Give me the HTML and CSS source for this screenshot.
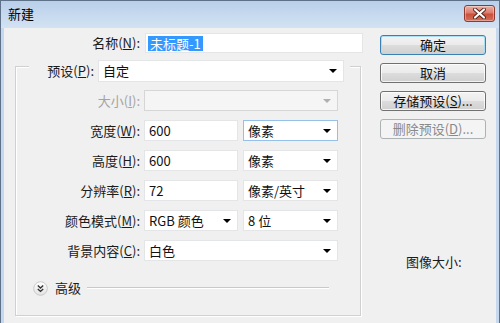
FILE: index.html
```html
<!DOCTYPE html>
<html lang="zh-CN">
<head>
    <meta charset="UTF-8">
    <title>新建</title>
    <link rel="stylesheet" href="styles.css">
</head>
<body>
    <div class="window">
        <div class="titlebar">
            <span class="title">新建</span>
            <span class="close">
                <svg width="13" height="11" viewBox="0 0 13 11">
                    <path d="M2 1.5 L11 9.5 M11 1.5 L2 9.5" stroke="#5a2118" stroke-width="4" stroke-linecap="round"/>
                    <path d="M2 1.5 L11 9.5 M11 1.5 L2 9.5" stroke="#ffffff" stroke-width="2.2" stroke-linecap="round"/>
                </svg>
            </span>
        </div>
        <div class="client">
            <div class="main">
                <div class="row name-row">
                    <label class="lbl lbl-name">名称(<u>N</u>):</label>
                    <div class="field w-name"><span class="selected">未标题-1</span></div>
                </div>

                <div class="group">
                    <div class="group-head">
                        <label class="lbl lbl-preset">预设(<u>P</u>):</label>
                        <div class="field combo w-preset">自定<i class="arrow"></i></div>
                    </div>

                    <div class="rows">
                        <div class="row disabled">
                            <label class="lbl">大小(<u>I</u>):</label>
                            <div class="field combo w-full"><i class="arrow"></i></div>
                        </div>
                        <div class="row">
                            <label class="lbl">宽度(<u>W</u>):</label>
                            <div class="field w-half">600</div>
                            <div class="field combo w-unit focused">像素<i class="arrow"></i></div>
                        </div>
                        <div class="row">
                            <label class="lbl">高度(<u>H</u>):</label>
                            <div class="field w-half">600</div>
                            <div class="field combo w-unit">像素<i class="arrow"></i></div>
                        </div>
                        <div class="row">
                            <label class="lbl">分辨率(<u>R</u>):</label>
                            <div class="field w-half">72</div>
                            <div class="field combo w-unit">像素/英寸<i class="arrow"></i></div>
                        </div>
                        <div class="row">
                            <label class="lbl">颜色模式(<u>M</u>):</label>
                            <div class="field combo w-half">RGB 颜色<i class="arrow"></i></div>
                            <div class="field combo w-unit">8 位<i class="arrow"></i></div>
                        </div>
                        <div class="row">
                            <label class="lbl">背景内容(<u>C</u>):</label>
                            <div class="field combo w-full">白色<i class="arrow"></i></div>
                        </div>
                    </div>

                    <div class="advanced">
                        <svg class="adv-icon" width="15" height="15" viewBox="0 0 15 15">
                            <defs>
                                <linearGradient id="knob" x1="0" y1="0" x2="0" y2="1">
                                    <stop offset="0" stop-color="#ffffff"/>
                                    <stop offset="1" stop-color="#e2e2e2"/>
                                </linearGradient>
                            </defs>
                            <circle cx="7.5" cy="7.5" r="6.8" fill="url(#knob)" stroke="#c9c9c9"/>
                            <path d="M4.8 4.6 L7.5 7 L10.2 4.6 M4.8 8 L7.5 10.4 L10.2 8" fill="none" stroke="#333" stroke-width="1.4"/>
                        </svg>
                        <span class="adv-text">高级</span>
                        <span class="adv-line"></span>
                    </div>
                </div>
            </div>

            <div class="side">
                <div class="btn default">确定</div>
                <div class="btn">取消</div>
                <div class="btn">存储预设(<u>S</u>)...</div>
                <div class="btn disabled">删除预设(<u>D</u>)...</div>
                <div class="img-size">图像大小:</div>
            </div>
        </div>
    </div>
</body>
</html>
```

FILE: styles.css
```css
body {
    margin: 0;
    font-family: "Noto Sans CJK SC", "Noto Sans", sans-serif;
    font-size: 13px;
    line-height: 16px;
    color: #1b1b1b;
}

.window {
    width: 500px;
    height: 323px;
    box-sizing: border-box;
    border: 1px solid #5f7188;
    border-bottom: none;
    background: #c6d8ee; /* frame colour */
    overflow: hidden;
}

.titlebar {
    height: 27px;
    display: flex;
    justify-content: space-between;
    align-items: flex-start;
    background: linear-gradient(to bottom, #b9d0ea, #d3e2f3);
}

.title {
    margin: 5px 0 0 7px;
    color: #000;
}

.close {
    width: 31px;
    height: 17px;
    margin: 4px 4px 0 0;
    box-sizing: border-box;
    display: flex;
    align-items: center;
    justify-content: center;
    border: 1px solid #8b3b2f;
    border-radius: 3px;
    background: linear-gradient(to bottom, #eab1a5 0%, #dd7c6c 45%, #c9503d 55%, #d5705c 100%);
    box-shadow: inset 0 0 0 1px rgba(255, 255, 255, 0.35);
}

.client {
    height: 295px;
    margin: 0 3px;
    display: flex;
    background: #f0f0f0;
}

.main {
    width: 376px;
    padding-top: 5px;
    display: flex;
    flex-direction: column;
}

.row {
    display: flex;
    align-items: center;
    gap: 4px;
}

.lbl {
    width: 124px;
    flex: none;
    text-align: right;
    white-space: nowrap;
}

.name-row {
    gap: 5px;
}

.lbl-name {
    width: 136px;
}

/* text boxes and combo boxes */
.field {
    height: 21px;
    box-sizing: border-box;
    flex: none;
    display: flex;
    align-items: center;
    padding: 0 6px 0 4px;
    background: #fff;
    border: 1px solid #e4e5e7;
    color: #111;
}

.combo {
    justify-content: space-between;
}

.arrow {
    width: 0;
    height: 0;
    border-left: 4px solid transparent;
    border-right: 4px solid transparent;
    border-top: 4px solid #000;
    margin-left: auto;
}

.focused {
    border-color: #95c0ea;
}

.w-name {
    width: 218px;
    height: 20px;
    padding-left: 2px;
}

.selected {
    background: #3399ff;
    color: #fff;
    padding: 0 2px;
    line-height: 15px;
}

.w-preset { width: 246px; height: 22px; }
.w-full { width: 194px; }
.w-half { width: 94px; }
.w-unit { width: 95px; margin-left: 1px; }

.disabled .lbl {
    color: #a3a3a3;
}

.disabled .field {
    background: #f5f5f5;
    border-color: #d6d6d6;
}

.disabled .arrow {
    border-top-color: #b0b0b0;
}

/* group box with etched border */
.group {
    margin: 13px 0 0 11px;
    width: 346px;
    box-sizing: border-box;
    border: 1px solid #d0d0d0;
    box-shadow: inset 1px 1px 0 #fff, 1px 1px 0 #fff;
    padding-bottom: 19px;
    display: flex;
    flex-direction: column;
}

.group-head {
    align-self: flex-start;
    margin: -7px 0 0 13px;
    padding-right: 6px;
    display: flex;
    align-items: center;
    gap: 4px;
    background: #f0f0f0;
}

.lbl-preset {
    width: 65px;
}

.rows {
    margin-top: 8px;
    display: flex;
    flex-direction: column;
    gap: 9px;
}

.advanced {
    margin: 19px 31px 0 17px;
    display: flex;
    align-items: center;
}

.adv-icon {
    flex: none;
}

.adv-text {
    margin-left: 7px;
}

.adv-line {
    flex: 1;
    margin-left: 6px;
    height: 0;
    border-top: 1px solid #c9c9c9;
    border-bottom: 1px solid #fff;
}

/* right column */
.side {
    padding: 7px 0 0 0;
    display: flex;
    flex-direction: column;
    gap: 8px;
    width: 106px;
}

.btn {
    height: 20px;
    box-sizing: border-box;
    display: flex;
    align-items: center;
    justify-content: center;
    border: 1px solid #707070;
    border-radius: 3px;
    background: linear-gradient(to bottom, #f3f3f3 0%, #ebebeb 50%, #dddddd 50%, #d0d0d0 100%);
    box-shadow: inset 0 0 0 1px rgba(255, 255, 255, 0.75);
    color: #111;
}

.btn.default {
    border-color: #3c7fb1;
    box-shadow: inset 0 0 0 1px #a9def4;
}

.btn.disabled {
    border-color: #adb2b5;
    background: #f4f4f4;
    box-shadow: none;
    color: #8a8a8a;
}

.img-size {
    margin: 107px 0 0 26px;
    white-space: nowrap;
}
```
